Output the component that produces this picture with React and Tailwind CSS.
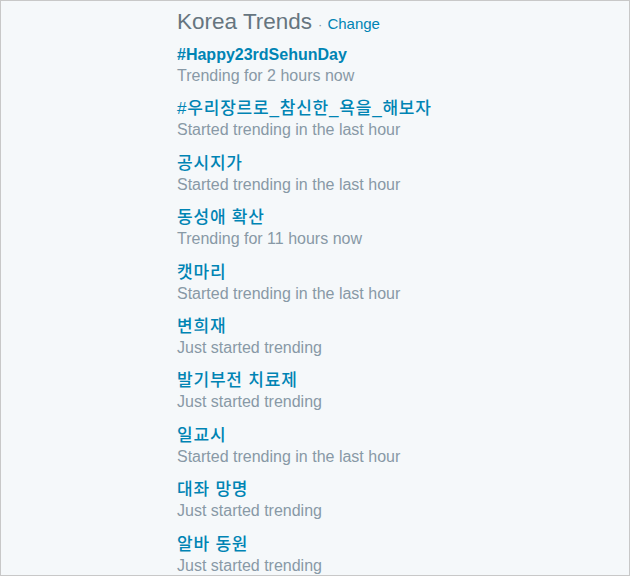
import React from "react";

const trends = [
  ["#Happy23rdSehunDay", "Trending for 2 hours now", true],
  ["#우리장르로_참신한_욕을_해보자", "Started trending in the last hour"],
  ["공시지가", "Started trending in the last hour"],
  ["동성애 확산", "Trending for 11 hours now"],
  ["캣마리", "Started trending in the last hour"],
  ["변희재", "Just started trending"],
  ["발기부전 치료제", "Just started trending"],
  ["일교시", "Started trending in the last hour"],
  ["대좌 망명", "Just started trending"],
  ["알바 동원", "Just started trending"],
];

export default function App() {
  return (
    <div className="w-[630px] h-[576px] overflow-hidden bg-[#f5f8fa] border border-[#c8c8c8] box-border font-['Liberation_Sans','Noto_Sans_CJK_KR',sans-serif]">
      <div className="pl-[176px] pt-[7px]">
        <div className="flex items-baseline leading-[28px] mb-[6px]">
          <span className="text-[22.5px] text-[#66757f]">Korea Trends</span>
          <span className="text-[13px] text-[#8899a6] ml-[6px]">·</span>
          <span className="text-[15px] text-[#0084b4] ml-[5px]">Change</span>
        </div>
        {trends.map(([t, s, bold], i) => (
          <div key={i} className="mb-[12.4px]">
            <div
              className={
                bold
                  ? "h-[20px] text-[16px] font-bold leading-[20px] text-[#0084b4]"
                  : "h-[20px] text-[17px] tracking-[0.8px] font-medium leading-[20px] text-[#0084b4]"
              }
            >
              {t}
            </div>
            <div className="h-[22px] text-[16px] leading-[22px] text-[#8899a6]">{s}</div>
          </div>
        ))}
      </div>
    </div>
  );
}
